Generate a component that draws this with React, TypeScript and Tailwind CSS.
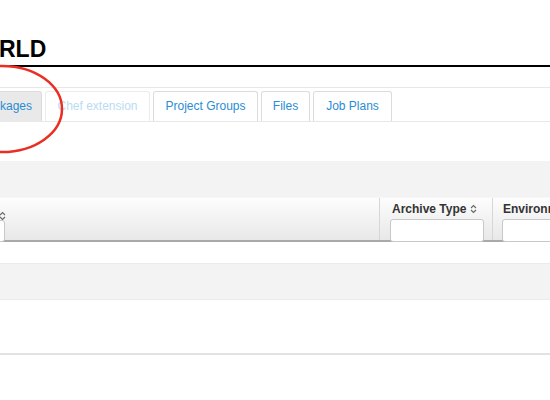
import React from "react";

function SortIcon() {
  return (
    <svg width="7" height="10" viewBox="0 0 7 10" className="inline-block shrink-0">
      <path d="M1 4 L3.5 1.5 L6 4" fill="none" stroke="#666" strokeWidth="1.1" />
      <path d="M1 6 L3.5 8.5 L6 6" fill="none" stroke="#666" strokeWidth="1.1" />
    </svg>
  );
}

export default function App() {
  return (
    <div
      className="relative w-[550px] h-[400px] overflow-hidden bg-white"
      style={{ fontFamily: '"Liberation Sans", Arial, sans-serif' }}
    >
      {/* Title */}
      <div className="h-[67px] border-b-2 border-black pt-[37px]">
        <div className="text-[23px] leading-[24px] font-bold text-black -ml-[1px]">RLD</div>
      </div>

      {/* Tabs */}
      <div className="mt-[20px] border-t border-[#e8e8e8] border-b border-[#dcdcdc] pt-[3px] flex gap-[3px]">
        <div className="w-[42px] h-[30px] bg-[#e9e9e9] border-r border-t border-[#dcdcdc] rounded-tr-[3px] text-[12px] leading-[28px] text-[#2a8dd4]">
          kages
        </div>
        <div className="w-[105px] h-[30px] text-center border border-b-0 border-[#ececec] rounded-t-[3px] text-[12px] leading-[28px] text-[#b9dcf2] whitespace-nowrap">
          Chef extension
        </div>
        <div className="w-[105px] h-[30px] text-center border border-b-0 border-[#dcdcdc] rounded-t-[3px] text-[12px] leading-[28px] text-[#2a8dd4] whitespace-nowrap">
          Project Groups
        </div>
        <div className="w-[49px] h-[30px] text-center border border-b-0 border-[#dcdcdc] rounded-t-[3px] text-[12px] leading-[28px] text-[#2a8dd4]">
          Files
        </div>
        <div className="w-[79px] h-[30px] text-center border border-b-0 border-[#dcdcdc] rounded-t-[3px] text-[12px] leading-[28px] text-[#2a8dd4] whitespace-nowrap">
          Job Plans
        </div>
      </div>

      {/* Gray band */}
      <div className="mt-[39px] h-[36px] bg-[#f3f3f3]" />

      {/* Header row */}
      <div className="flex h-[45px] border-t border-[#f7f7f7] border-b-2 border-b-[#a9a9a9] bg-gradient-to-b from-[#fdfdfd] to-[#e8e8e8]">
        <div className="w-[380px] shrink-0 border-r border-[#d6d6d6] pt-[5px]">
          <div className="h-[12px] -ml-[1px]">
            <SortIcon />
          </div>
          <div className="mt-[5px] -ml-[15px] w-[20px] h-[22px] bg-white border border-[#c8c8c8] rounded-[3px]" />
        </div>
        <div className="w-[113px] shrink-0 border-r border-[#d6d6d6] pt-[4px] pl-[10px]">
          <div className="h-[14px] text-[12px] leading-[14px] font-bold text-[#333] pl-[2px] flex items-center gap-[4px] whitespace-nowrap">
            Archive Type <SortIcon />
          </div>
          <div className="mt-[3px] w-[94px] h-[23px] bg-white border border-[#c8c8c8] rounded-[3px]" />
        </div>
        <div className="w-[200px] shrink-0 pt-[4px] pl-[9px] whitespace-nowrap">
          <div className="h-[14px] text-[12px] leading-[14px] font-bold text-[#333] pl-[1px]">
            Environment
          </div>
          <div className="mt-[3px] w-[94px] h-[23px] bg-white border border-[#c8c8c8] rounded-[3px]" />
        </div>
      </div>

      {/* Rows */}
      <div className="h-[21px] bg-white" />
      <div className="h-[37px] bg-[#f3f3f3] border-t border-[#dedede] border-b border-[#ebebeb]" />
      <div className="h-[55px] bg-white border-b-2 border-[#e2e2e2]" />

      {/* Red annotation ellipse */}
      <svg className="absolute left-0 top-0 pointer-events-none" width="550" height="400">
        <ellipse cx="2" cy="109" rx="60" ry="43" fill="none" stroke="#ea2e23" strokeWidth="2.5" />
      </svg>
    </div>
  );
}
